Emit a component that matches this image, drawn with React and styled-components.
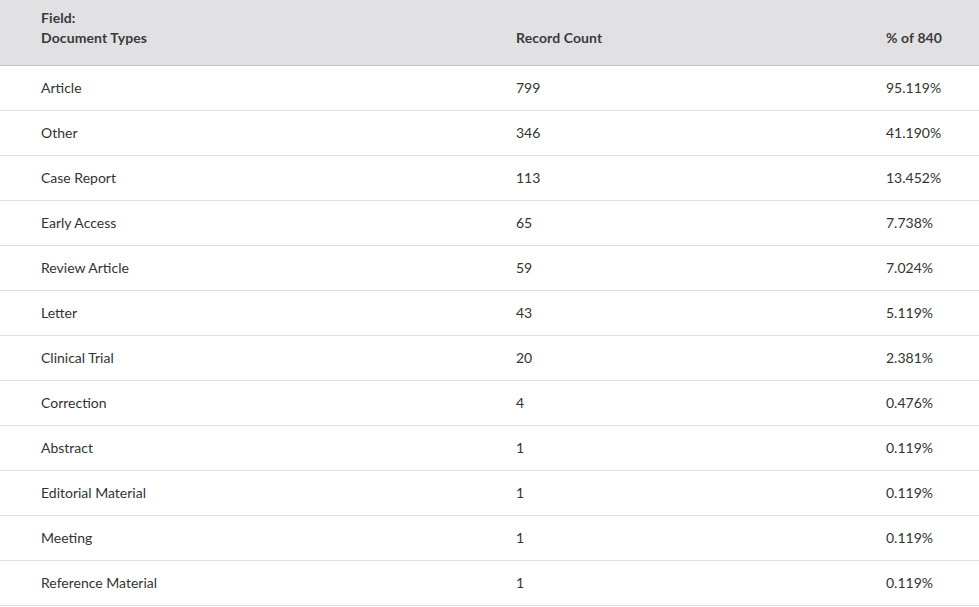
import React from 'react';
import styled, { createGlobalStyle } from 'styled-components';

const GlobalStyle = createGlobalStyle`
  body {
    margin: 0;
    background: #ffffff;
    font-family: Lato, "Noto Sans", "Liberation Sans", sans-serif;
    color: #333333;
  }
`;

const Table = styled.div`
  width: 979px;
`;

const Row = styled.div`
  display: grid;
  grid-template-columns: 475px 370px 1fr;
  padding-left: 41px;
  align-items: center;
  height: ${({ header }) => (header ? '66px' : '45px')};
  box-sizing: border-box;
  background: ${({ header }) => (header ? '#e1e1e4' : '#ffffff')};
  border-bottom: 1px solid ${({ header }) => (header ? '#c4c4c6' : '#e0e0e0')};
`;

const HeadCell = styled.div`
  align-self: end;
  padding-bottom: 17px;
  font-size: 14px;
  line-height: 20px;
  font-weight: 700;
  letter-spacing: 0.1px;
  color: #3a3a3c;
`;

const Cell = styled.div`
  font-size: 14px;
  line-height: 20px;
  color: #333333;
`;

const rows = [
  ['Article', '799', '95.119%'],
  ['Other', '346', '41.190%'],
  ['Case Report', '113', '13.452%'],
  ['Early Access', '65', '7.738%'],
  ['Review Article', '59', '7.024%'],
  ['Letter', '43', '5.119%'],
  ['Clinical Trial', '20', '2.381%'],
  ['Correction', '4', '0.476%'],
  ['Abstract', '1', '0.119%'],
  ['Editorial Material', '1', '0.119%'],
  ['Meeting', '1', '0.119%'],
  ['Reference Material', '1', '0.119%'],
];

const App = () => (
  <>
    <GlobalStyle />
    <Table>
      <Row header>
        <HeadCell>
          Field:
          <br />
          Document Types
        </HeadCell>
        <HeadCell>Record Count</HeadCell>
        <HeadCell>% of 840</HeadCell>
      </Row>
      {rows.map(([name, count, pct]) => (
        <Row key={name}>
          <Cell>{name}</Cell>
          <Cell>{count}</Cell>
          <Cell>{pct}</Cell>
        </Row>
      ))}
    </Table>
  </>
);

export default App;
